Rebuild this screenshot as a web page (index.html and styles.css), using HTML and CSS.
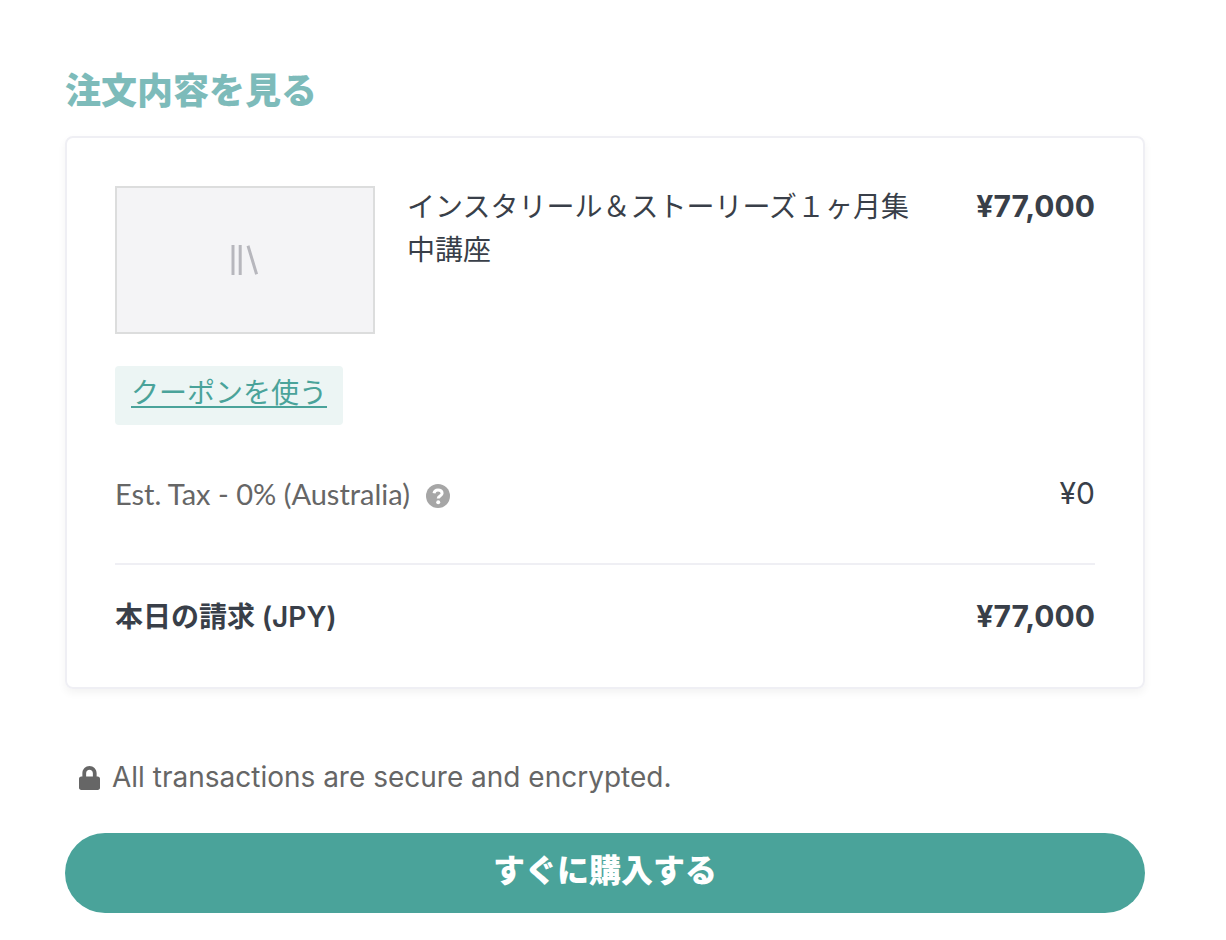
FILE: index.html
```
<!DOCTYPE html>
<html lang="ja">
<head>
  <meta charset="UTF-8" />
  <meta name="viewport" content="width=device-width, initial-scale=1" />
  <title>注文内容</title>
  <link rel="stylesheet" href="styles.css">
</head>
<body>

  <main class="checkout">
    <h1>注文内容を見る</h1>

    <section class="card">
      <div class="product">
        <div class="thumb">
          <svg width="28" height="32" viewBox="0 0 28 32" fill="none" stroke="#b7b7bd" stroke-width="3" aria-hidden="true">
            <path d="M2 1v30M9.200 1v30M17 1.700l8.600 28.600" />
          </svg>
        </div>
        <p class="product-name">インスタリール＆ストーリーズ１ヶ月集中講座</p>
        <p class="price">¥77,000</p>
      </div>

      <a href="#" class="coupon">クーポンを使う</a>

      <div class="row tax">
        <p class="tax-label">
          Est. Tax - 0% (Australia)
          <button type="button" class="help" aria-label="Help">
            <svg width="24" height="24" viewBox="0 0 24 24" aria-hidden="true">
              <circle cx="12" cy="12" r="12" fill="#a6a6a6" />
              <path d="M8 9.2C8.4 7 9.9 5.900 12 5.900c2.300 0 4.100 1.300 4.100 3.300 0 2.900-3.900 2.700-3.900 5.300" fill="none" stroke="#fff" stroke-width="3" />
              <circle cx="12.200" cy="18.200" r="2" fill="#fff" />
            </svg>
          </button>
        </p>
        <p class="tax-value">¥0</p>
      </div>

      <div class="row total">
        <p>本日の請求 <span class="currency">(JPY)</span></p>
        <p class="price">¥77,000</p>
      </div>
    </section>

    <p class="secure">
      <svg width="21" height="24" viewBox="0 0 448 512" fill="#666" aria-hidden="true">
        <path d="M400 224h-24v-72C376 68.200 307.800 0 224 0S72 68.200 72 152v72H48c-26.500 0-48 21.500-48 48v192c0 26.500 21.500 48 48 48h352c26.500 0 48-21.500 48-48V272c0-26.500-21.500-48-48-48zm-104 0H152v-72c0-39.700 32.300-72 72-72s72 32.300 72 72v72z" />
      </svg>
      All transactions are secure and encrypted.
    </p>

    <button type="submit" class="buy">すぐに購入する</button>
  </main>

</body>
</html>
```
FILE: styles.css
```
* {
  box-sizing: border-box;
}

body {
  margin: 0;
  padding: 65px 81px 24px 65px;
  background: #fff;
  color: #393f49;
  font-family: Inter, "Noto Sans CJK JP", sans-serif;
  font-size: 28px;
  line-height: 43px;
}

h1,
p {
  margin: 0;
}

h1 {
  margin-bottom: 19px;
  color: #7dbbba;
  font-size: 36px;
  font-weight: 900;
  line-height: 52px;
}

.card {
  padding: 48px;
  border: 2px solid #efeff4;
  border-radius: 8px;
  box-shadow: 0 4px 8px rgba(0, 0, 0, 0.05);
}

.product {
  display: flex;
  align-items: flex-start;
  margin-bottom: 32px;
}

.thumb {
  display: flex;
  align-items: center;
  justify-content: center;
  flex: none;
  width: 260px;
  height: 148px;
  margin-right: 32px;
  border: 2px solid #dcdddd;
  background: #f4f4f6;
}

.product-name {
  flex: 1;
  margin-right: 48px;
}

.price {
  font-size: 30px;
  font-weight: 700;
  line-height: 40px;
}

.coupon {
  display: inline-block;
  padding: 6px 16px 10px;
  border-radius: 4px;
  background: #ecf5f4;
  color: #4aa39a;
  text-underline-offset: 3px;
  text-decoration-thickness: 2px;
}

.row {
  display: flex;
  justify-content: space-between;
}

.tax {
  margin-top: 47px;
  padding-bottom: 48px;
  border-bottom: 2px solid #efeff4;
}

.tax-label {
  display: flex;
  align-items: center;
  gap: 16px;
  color: #666;
  font-family: Lato, sans-serif;
  font-size: 29px;
}

.tax-value {
  font-size: 30px;
}

.help {
  display: flex;
  margin-top: 4px;
  padding: 0;
  border: 0;
  background: none;
  cursor: pointer;
}

.total {
  padding-top: 31px;
  font-weight: 700;
}

.currency {
  font-weight: 600;
}

.secure {
  display: flex;
  align-items: center;
  gap: 12px;
  margin: 67px 14px 34px;
  color: #666;
}

.buy {
  display: block;
  width: 100%;
  padding: 14px 32px 18px;
  border: 0;
  border-radius: 40px;
  background: #4aa39a;
  color: #fff;
  font-family: inherit;
  font-size: 32px;
  font-weight: 900;
  line-height: 48px;
  cursor: pointer;
}
```
